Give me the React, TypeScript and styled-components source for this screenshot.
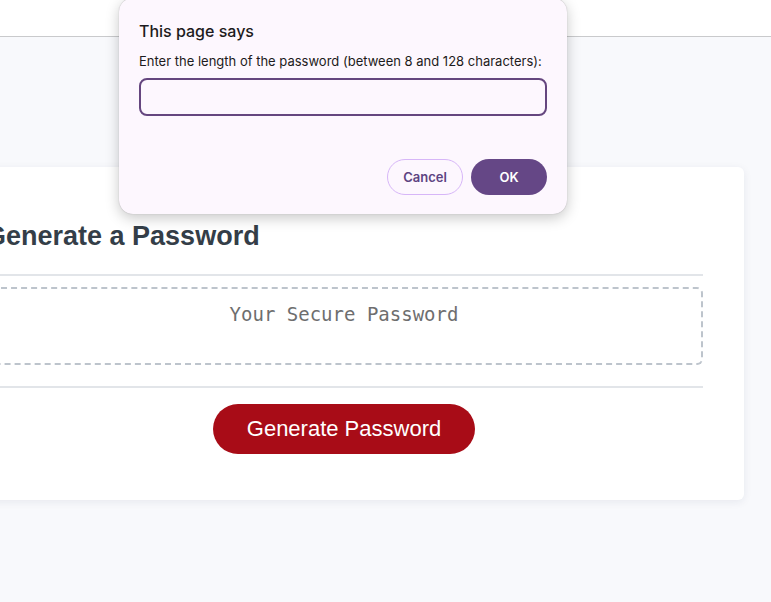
import React from 'react';
import styled, { createGlobalStyle } from 'styled-components';

const GlobalStyle = createGlobalStyle`
  html, body {
    margin: 0;
    padding: 0;
    background: #f8f9fc;
    overflow: hidden;
  }
  body {
    font-family: 'Liberation Sans', Arial, sans-serif;
  }
`;

const Page = styled.div`
  position: relative;
  width: 771px;
  height: 602px;
  overflow: hidden;
`;

const Header = styled.header`
  height: 36px;
  background: #ffffff;
  border-bottom: 1px solid #c9cacc;
`;

const Main = styled.main`
  display: flex;
  padding-top: 130px;
`;

const Card = styled.section`
  flex: none;
  width: 800px;
  margin-left: -56px;
  box-sizing: border-box;
  padding: 0 41px 46px;
  background: #ffffff;
  border-radius: 6px;
  box-shadow: 0 2px 8px rgba(30, 40, 80, 0.08);
  display: flex;
  flex-direction: column;
  align-items: center;
`;

const CardHeader = styled.div`
  align-self: stretch;
  padding-top: 54px;
  padding-bottom: 22px;
  border-bottom: 2px solid #e2e5e9;
`;

const Title = styled.h2`
  margin: 0;
  font-size: 27px;
  line-height: 31px;
  font-weight: 700;
  color: #343e48;
`;

const CardBody = styled.div`
  align-self: stretch;
  padding: 11px 0 21px;
  border-bottom: 2px solid #e2e5e9;
`;

const Output = styled.textarea`
  display: block;
  width: 100%;
  height: 78px;
  box-sizing: border-box;
  padding: 14px 10px 0;
  border: 2px dashed #bdc4cc;
  border-radius: 6px;
  resize: none;
  outline: none;
  background: #ffffff;
  font-family: 'DejaVu Sans Mono', 'Liberation Mono', monospace;
  font-size: 19px;
  text-align: center;
  color: #333;
  &::placeholder {
    color: #6e6e6e;
  }
`;

const GenerateButton = styled.button`
  margin-top: 16px;
  height: 50px;
  padding: 0 34px;
  border: none;
  border-radius: 25px;
  background: #a80c17;
  color: #ffffff;
  font-family: 'Liberation Sans', Arial, sans-serif;
  font-size: 22px;
  cursor: pointer;
`;

const Dialog = styled.div`
  position: absolute;
  left: 119px;
  top: -2px;
  width: 448px;
  height: 216px;
  box-sizing: border-box;
  padding: 24px 20px 19px;
  background: #fdf7fe;
  border-radius: 14px;
  box-shadow: 0 4px 14px rgba(0, 0, 0, 0.22), 0 0 1px rgba(0, 0, 0, 0.3);
  display: flex;
  flex-direction: column;
  font-family: Inter, 'Noto Sans', sans-serif;
`;

const DialogTitle = styled.div`
  font-size: 16px;
  font-weight: 500;
  color: #1d1b20;
  line-height: 19px;
`;

const DialogLabel = styled.label`
  margin-top: 12px;
  font-size: 13px;
  color: #1d1b20;
  line-height: 16px;
`;

const PromptInput = styled.input`
  margin-top: 9px;
  height: 38px;
  box-sizing: border-box;
  border: 2px solid #65467f;
  border-radius: 8px;
  background: transparent;
  outline: none;
  padding: 0 10px;
  font-size: 13px;
`;

const Actions = styled.div`
  margin-top: auto;
  display: flex;
  justify-content: flex-end;
  gap: 8px;
`;

const DialogButton = styled.button<{ $primary?: boolean }>`
  width: 76px;
  height: 36px;
  box-sizing: border-box;
  border-radius: 18px;
  font-family: Inter, 'Noto Sans', sans-serif;
  font-size: 13px;
  font-weight: 600;
  cursor: pointer;
  border: ${(p) => (p.$primary ? 'none' : '1px solid #d7b6f8')};
  background: ${(p) => (p.$primary ? '#654786' : 'transparent')};
  color: ${(p) => (p.$primary ? '#ffffff' : '#5e4482')};
`;

export default function App() {
  return (
    <Page>
      <GlobalStyle />
      <Header />
      <Main>
        <Card>
          <CardHeader>
            <Title>Generate a Password</Title>
          </CardHeader>
          <CardBody>
            <Output readOnly placeholder="Your Secure Password" />
          </CardBody>
          <GenerateButton>Generate Password</GenerateButton>
        </Card>
      </Main>
      <Dialog>
        <DialogTitle>This page says</DialogTitle>
        <DialogLabel>Enter the length of the password (between 8 and 128 characters):</DialogLabel>
        <PromptInput />
        <Actions>
          <DialogButton>Cancel</DialogButton>
          <DialogButton $primary>OK</DialogButton>
        </Actions>
      </Dialog>
    </Page>
  );
}
